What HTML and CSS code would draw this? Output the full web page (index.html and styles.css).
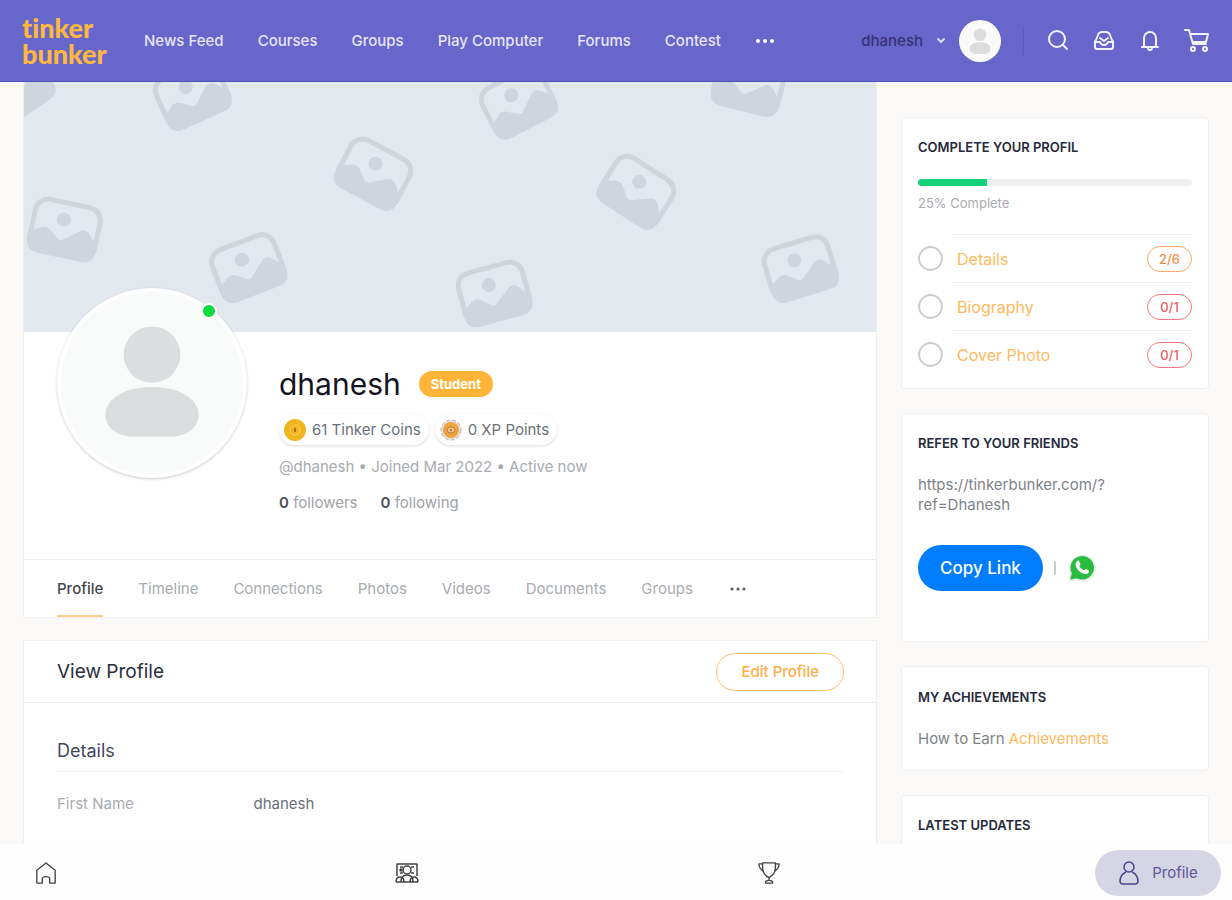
FILE: index.html
```html
<!DOCTYPE html>
<html lang="en">
<head>
    <meta charset="UTF-8">
    <meta name="viewport" content="width=device-width, initial-scale=1.0">
    <title>dhanesh - Tinker Bunker</title>
    <link rel="stylesheet" href="styles.css">
</head>
<body>
    <!-- Header -->
    <header class="site-header">
        <a href="#" class="logo"><span>tinker</span><span>bunker</span></a>
        <nav class="main-nav">
            <a href="#">News Feed</a>
            <a href="#">Courses</a>
            <a href="#">Groups</a>
            <a href="#">Play Computer</a>
            <a href="#">Forums</a>
            <a href="#">Contest</a>
            <button class="more" aria-label="More">
                <svg width="20" height="6" viewBox="0 0 20 6" fill="currentColor"><circle cx="3" cy="3" r="2"/><circle cx="10" cy="3" r="2"/><circle cx="17" cy="3" r="2"/></svg>
            </button>
        </nav>
        <div class="header-aside">
            <a href="#" class="user-link">
                <span>dhanesh</span>
                <svg width="10" height="8" viewBox="0 0 10 8" fill="none" stroke="#dddcf8" stroke-width="2" stroke-linecap="round" stroke-linejoin="round"><path d="M2 2l3 3 3-3"/></svg>
                <svg class="user-pic" viewBox="0 0 100 100"><circle cx="50" cy="50" r="50" fill="#fafafa"/><circle cx="50" cy="35" r="15" fill="#dcdddf"/><path d="M25 68c0-11 13-15 25-15s25 4 25 15c0 9-7 13-15 13H40c-8 0-15-4-15-13z" fill="#dcdddf"/></svg>
            </a>
            <span class="divider"></span>
            <button class="icon-btn" aria-label="Search">
                <svg width="24" height="24" viewBox="0 0 24 24"><circle cx="11" cy="10" r="8"/><path d="M17 16l4 4"/></svg>
            </button>
            <button class="icon-btn" aria-label="Messages">
                <svg width="24" height="24" viewBox="0 0 24 24"><path d="M4 11l2-5q1-3 4-3h4q3 0 4 3l2 5q1 1 1 2v5q0 2-2 2H5q-2 0-2-2v-5q0-1 1-2z"/><path d="M3 13h5q1 3 4 3t4-3h5M8 9l4 3 4-3"/></svg>
            </button>
            <button class="icon-btn" aria-label="Notifications">
                <svg width="24" height="24" viewBox="0 0 24 24"><path d="M6 17V9a6 6 0 0 1 12 0v8M4 18h16"/><path d="M10 20q2 2 4 0"/></svg>
            </button>
            <button class="icon-btn" aria-label="Cart">
                <svg width="26" height="26" viewBox="0 0 26 26"><path d="M1 2h4l4 14h13M6 6h18l-2 8H9"/><circle cx="9" cy="21" r="2"/><circle cx="21" cy="21" r="2"/></svg>
            </button>
        </div>
    </header>

    <div class="page">
        <!-- Main Content -->
        <main>
            <section class="card profile-card">
                <svg class="cover" viewBox="0 0 854 250" preserveAspectRatio="xMidYMid slice">
                    <defs>
                        <g id="photo">
                            <rect x="-33" y="-26" width="66" height="52" rx="13" fill="none" stroke="#d0d5db" stroke-width="5"/>
                            <circle cx="-3" cy="-9" r="7" fill="#cfd5dd"/>
                            <path d="M-35 10L-25 4q5-4 10-1l10 8q3 2 6-1L14 0q6-5 11 0l10 12v3q0 14-13 14h-44q-13 0-13-14z" fill="#cfd5dd"/>
                        </g>
                    </defs>
                    <rect width="854" height="250" fill="#e3e8ef"/>
                    <use href="#photo" transform="translate(-8 6) rotate(-34)"/>
                    <use href="#photo" transform="translate(169 12) rotate(-24)"/>
                    <use href="#photo" transform="translate(351 91) rotate(28)"/>
                    <use href="#photo" transform="translate(42 147) rotate(12)"/>
                    <use href="#photo" transform="translate(225 185) rotate(-21)"/>
                    <use href="#photo" transform="translate(495 20) rotate(-27)"/>
                    <use href="#photo" transform="translate(614 109) rotate(33)"/>
                    <use href="#photo" transform="translate(471 211) rotate(-15)"/>
                    <use href="#photo" transform="translate(726 1) rotate(14)"/>
                    <use href="#photo" transform="translate(777 186) rotate(-17)"/>
                </svg>
                <div class="profile-head">
                    <div class="avatar">
                        <svg viewBox="0 0 180 180"><circle cx="90" cy="62" r="28" fill="#dcdddf"/><path d="M44 121c0-17 22-27 46-27s46 10 46 27c0 14-12 22-26 22H70c-14 0-26-8-26-22z" fill="#dcdddf"/></svg>
                        <span class="online"></span>
                    </div>
                    <div class="profile-info">
                        <div class="name-row">
                            <h1>dhanesh</h1>
                            <span class="role">Student</span>
                        </div>
                        <div class="chips">
                            <span class="chip">
                                <svg width="22" height="22" viewBox="0 0 22 22"><circle cx="11" cy="11" r="11" fill="#f1b51f"/><circle cx="11" cy="11" r="5" fill="none" stroke="#fbd35c" stroke-width="1"/><path d="M11 9v4" stroke="#a97412" stroke-width="2"/></svg>
                                61 Tinker Coins
                            </span>
                            <span class="chip">
                                <svg width="22" height="22" viewBox="0 0 22 22"><circle cx="11" cy="11" r="10" fill="#e4e2e4" stroke="#b6b3b8" stroke-dasharray="4 2"/><circle cx="11" cy="11" r="8" fill="#f3a33c"/><ellipse cx="11" cy="11" rx="4" ry="3" fill="#f8c47c" stroke="#a9815e"/><circle cx="11" cy="11" r="1" fill="#7d6a66"/></svg>
                                0 XP Points
                            </span>
                        </div>
                        <p class="meta">@dhanesh • Joined Mar 2022 • Active now</p>
                        <p class="follow"><span><b>0</b> followers</span><span><b>0</b> following</span></p>
                    </div>
                </div>
                <nav class="tabs">
                    <a href="#" class="active">Profile</a>
                    <a href="#">Timeline</a>
                    <a href="#">Connections</a>
                    <a href="#">Photos</a>
                    <a href="#">Videos</a>
                    <a href="#">Documents</a>
                    <a href="#">Groups</a>
                    <button class="more" aria-label="More tabs">
                        <svg width="20" height="6" viewBox="0 0 20 6" fill="currentColor"><circle cx="4" cy="3" r="1.6"/><circle cx="10" cy="3" r="1.6"/><circle cx="16" cy="3" r="1.6"/></svg>
                    </button>
                </nav>
            </section>

            <section class="card view-profile">
                <div class="view-head">
                    <h2>View Profile</h2>
                    <button class="edit-btn">Edit Profile</button>
                </div>
                <div class="view-body">
                    <h3>Details</h3>
                    <table>
                        <tr>
                            <th scope="row">First Name</th>
                            <td>dhanesh</td>
                        </tr>
                    </table>
                </div>
            </section>
        </main>

        <!-- Sidebar -->
        <aside>
            <section class="card widget completion">
                <h2>Complete Your Profil</h2>
                <div class="bar"><div class="bar-fill" style="width: 25%"></div></div>
                <p class="bar-text">25% Complete</p>
                <ul>
                    <li><span class="ring"></span><div class="step"><a href="#">Details</a><span class="count partial">2/6</span></div></li>
                    <li><span class="ring"></span><div class="step"><a href="#">Biography</a><span class="count">0/1</span></div></li>
                    <li><span class="ring"></span><div class="step"><a href="#">Cover Photo</a><span class="count">0/1</span></div></li>
                </ul>
            </section>

            <section class="card widget refer">
                <h2>Refer to your friends</h2>
                <p>https://tinkerbunker.com/?<br>ref=Dhanesh</p>
                <div class="share">
                    <button class="copy-btn">Copy Link</button>
                    <span class="share-line"></span>
                    <a href="#" aria-label="Share on WhatsApp">
                        <svg width="30" height="30" viewBox="0 0 28 28"><path d="M1 27l2-8A12.500 12.500 0 1 1 8 25z" fill="#eef0ee"/><path d="M3 25l1.500-6A11 11 0 1 1 9 23.500z" fill="#27bd3f"/><path d="M9.500 7.500c.8-.7 1.700-.5 2 .3l1 2.400c.2.600-.9 1.500-1 2 .8 1.900 2.400 3.300 4.300 4 .5 0 1.300-1.500 2-1.200l2.400 1.200c.8.400.6 1.500 0 2.200-1.300 1.400-3.300 1.500-5.300.7-3.200-1.200-5.500-3.600-6.500-6.300-.7-2-.4-4 1.100-5.300z" fill="#fff"/></svg>
                    </a>
                </div>
            </section>

            <section class="card widget achievements">
                <h2>My Achievements</h2>
                <p>How to Earn <a href="#">Achievements</a></p>
            </section>

            <section class="card widget updates">
                <h2>Latest Updates</h2>
            </section>
        </aside>
    </div>

    <!-- Bottom Bar -->
    <nav class="bottom-bar">
        <a href="#" aria-label="Home">
            <svg width="22" height="24" viewBox="0 0 24 26"><path d="M2 24V10l10-8 10 8v14h-6v-5q0-2-4-2t-4 2v5z"/></svg>
        </a>
        <a href="#" aria-label="Courses">
            <svg width="24" height="22" viewBox="0 0 24 22"><path d="M2 14V2h20v12M5 5h3M16 5h3M5 11h3M16 11h3"/><circle cx="12" cy="8" r="4"/><circle cx="6" cy="8" r="1" fill="#222"/><path d="M1 20q0-5 4-5t4 5M15 20q0-5 4-5t4 5M6 20q0-7 6-7t6 7zM1 20h22"/></svg>
        </a>
        <a href="#" aria-label="Leaderboard">
            <svg width="22" height="24" viewBox="0 0 24 26"><path d="M5 2h14v5c0 6-3 9-7 11-4-2-7-5-7-11z"/><path d="M5 3H1c0 4 1 6 5 8M19 3h4c0 4-1 6-5 8M12 18v3M8 24q0-3 4-3t4 3z"/></svg>
        </a>
        <a href="#" class="current">
            <svg width="22" height="26" viewBox="0 0 22 26"><circle cx="11" cy="7" r="5"/><path d="M8 12c-4 2-6 5-6 9 0 2 1 3 3 3h12c2 0 3-1 3-3 0-4-2-7-6-9"/></svg>
            Profile
        </a>
    </nav>
</body>
</html>
```
FILE: styles.css
```css
/* Global Styles */
* {
    box-sizing: border-box;
}

body {
    display: flex;
    flex-direction: column;
    height: 100vh;
    margin: 0;
    overflow: hidden;
    font-family: Inter, "Liberation Sans", sans-serif;
    font-size: 15px;
    line-height: 20px;
    background-color: #faf9f7;
    color: #6b7078;
}

h1, h2, h3, p, ul {
    margin: 0;
    padding: 0;
    font-weight: 400;
}

a {
    color: #ffb95c;
    text-decoration: none;
}

button {
    font-family: inherit;
    font-size: 15px;
    padding: 0;
    border: none;
    background: none;
    cursor: pointer;
}

svg {
    display: block;
    flex-shrink: 0;
}

.card {
    background-color: #fff;
    border: 1px solid #efefef;
}

/* Header */
.site-header {
    display: flex;
    align-items: center;
    flex-shrink: 0;
    height: 82px;
    padding: 0 22px;
    background-color: #6766ca;
    border-bottom: 1px solid #5350bd;
}

.logo {
    display: flex;
    flex-direction: column;
    width: 88px;
    margin-right: 34px;
    font-family: Lato, sans-serif;
    font-size: 27px;
    font-weight: 900;
    font-variant-ligatures: none;
    line-height: 26px;
    color: #ffb83f;
}

.main-nav {
    display: flex;
    align-items: center;
    gap: 34px;
}

.main-nav a {
    font-weight: 500;
    color: #e6e5fb;
    white-space: nowrap;
}

.main-nav .more {
    color: #fff;
}

.header-aside {
    display: flex;
    align-items: center;
    gap: 22px;
    margin-left: auto;
}

.user-link {
    display: flex;
    align-items: center;
    gap: 13px;
    font-weight: 500;
    color: #343276;
}

.user-pic {
    width: 42px;
    height: 42px;
}

.divider {
    width: 1px;
    height: 28px;
    background-color: #5e5cbd;
}

.icon-btn svg {
    fill: none;
    stroke: #f2f1ff;
    stroke-width: 2;
    stroke-linecap: round;
    stroke-linejoin: round;
}

/* Page */
.page {
    display: grid;
    grid-template-columns: 1fr 308px;
    gap: 24px;
    flex: 1;
    min-height: 0;
    overflow: hidden;
    padding: 0 23px;
}

/* Profile card */
.profile-card {
    border-top: none;
}

.cover {
    width: 100%;
    height: 250px;
}

.profile-head {
    display: flex;
    gap: 32px;
    height: 227px;
    padding: 0 33px;
}

.avatar {
    position: relative;
    flex-shrink: 0;
    width: 190px;
    height: 190px;
    margin-top: -44px;
    border: 4px solid #fff;
    border-radius: 50%;
    background-color: #f9fafa;
    box-shadow: 0 1px 3px rgba(0, 0, 0, 0.2);
}

.online {
    position: absolute;
    top: 11px;
    right: 26px;
    width: 16px;
    height: 16px;
    border: 2px solid #fff;
    border-radius: 50%;
    background-color: #0bdb3c;
}

.profile-info {
    padding-top: 34px;
}

.name-row {
    display: flex;
    align-items: center;
    gap: 18px;
}

h1 {
    font-size: 30px;
    line-height: 36px;
    color: #14141f;
}

.role {
    padding: 3px 12px;
    border-radius: 13px;
    background-color: #ffb437;
    color: #fff;
    font-size: 13px;
    font-weight: 700;
}

.chips {
    display: flex;
    gap: 6px;
    margin-top: 12px;
}

.chip {
    display: flex;
    align-items: center;
    gap: 6px;
    height: 31px;
    padding: 0 8px 0 5px;
    border-radius: 16px;
    box-shadow: 0 1px 3px rgba(0, 0, 0, 0.15);
}

.meta {
    margin-top: 12px;
    color: #a9abaf;
}

.follow {
    display: flex;
    gap: 23px;
    margin-top: 16px;
    color: #a0a3a8;
}

.follow b {
    font-weight: 600;
    color: #4d5158;
}

.tabs {
    display: flex;
    gap: 35px;
    padding: 0 33px;
    border-top: 1px solid #ececee;
}

.tabs a {
    padding: 19px 0 16px;
    border-bottom: 2px solid transparent;
    color: #a9abaf;
}

.tabs .active {
    border-color: #ffcd8c;
    color: #43474f;
    font-weight: 500;
}

.tabs .more {
    color: #5b5f66;
}

/* View profile */
.view-profile {
    margin-top: 22px;
    height: 260px;
}

.view-head {
    display: flex;
    align-items: center;
    justify-content: space-between;
    height: 62px;
    padding: 0 32px 0 33px;
    border-bottom: 1px solid #ececee;
}

.view-head h2 {
    font-size: 19px;
    color: #2b2d3d;
}

.edit-btn {
    height: 38px;
    padding: 0 24px;
    border: 1px solid #ffc270;
    border-radius: 19px;
    color: #ffae45;
    font-weight: 500;
}

.view-body {
    padding: 38px 33px;
}

.view-body h3 {
    padding-bottom: 10px;
    border-bottom: 1px solid #efeff0;
    font-size: 18px;
    color: #43475a;
}

.view-body table {
    width: 100%;
    margin-top: 22px;
    border-collapse: collapse;
}

.view-body th, .view-body td {
    padding: 0;
    font-weight: 400;
    text-align: left;
}

.view-body th {
    width: 25%;
    color: #a9abaf;
}

/* Sidebar */
aside {
    display: flex;
    flex-direction: column;
    gap: 24px;
    padding-top: 35px;
}

.widget {
    flex-shrink: 0;
    padding: 19px 16px;
    border-radius: 4px;
}

.widget h2 {
    font-size: 13px;
    font-weight: 600;
    text-transform: uppercase;
    color: #25293b;
}

.completion {
    padding-bottom: 10px;
}

.bar {
    height: 7px;
    margin-top: 22px;
    border-radius: 4px;
    overflow: hidden;
    background-color: #eff0f0;
}

.bar-fill {
    height: 7px;
    background-color: #16d07a;
}

.completion ul {
    list-style: none;
}

.completion li {
    display: flex;
    align-items: center;
    gap: 10px;
    height: 48px;
}

.ring {
    width: 25px;
    height: 25px;
    border: 2px solid #cdced0;
    border-radius: 50%;
}

.step {
    display: flex;
    align-items: center;
    justify-content: space-between;
    flex: 1;
    height: 48px;
    padding-left: 4px;
    border-top: 1px solid #efeff0;
}

.step a {
    font-size: 16px;
}

.count {
    width: 45px;
    padding: 2px 0;
    border: 1px solid #f5747f;
    border-radius: 13px;
    font-size: 13px;
    font-weight: 500;
    text-align: center;
    color: #e9606b;
}

.count.partial {
    border-color: #ffa467;
    color: #ee8f4e;
}

.refer {
    height: 229px;
}

.widget p {
    color: #7f8388;
}

.widget .bar-text {
    margin: 7px 0 21px;
    font-size: 13px;
    color: #a9abaf;
}

.refer p, .achievements p {
    margin-top: 22px;
}

.share {
    display: flex;
    align-items: center;
    gap: 11px;
    margin-top: 30px;
}

.copy-btn {
    height: 46px;
    padding: 0 22px;
    border-radius: 23px;
    background-color: #007cff;
    color: #fff;
    font-size: 17px;
    font-weight: 500;
}

.share-line {
    width: 2px;
    height: 14px;
    background-color: #ccc;
}

.achievements {
    padding: 20px 16px 21px;
}

.updates {
    height: 160px;
}

/* Bottom Bar */
.bottom-bar {
    display: flex;
    align-items: center;
    justify-content: space-between;
    flex-shrink: 0;
    height: 56px;
    padding: 2px 11px 0;
    background-color: #fefefe;
}

.bottom-bar a {
    display: flex;
    align-items: center;
    justify-content: center;
    gap: 12px;
    width: 70px;
    height: 46px;
}

.bottom-bar svg {
    fill: none;
    stroke: #444;
    stroke-width: 1.5;
    stroke-linejoin: round;
}

.bottom-bar .current {
    width: 126px;
    border-radius: 23px;
    background-color: #d5d5e6;
    color: #5c5691;
}

.bottom-bar .current svg {
    stroke: #4b448c;
}
```
